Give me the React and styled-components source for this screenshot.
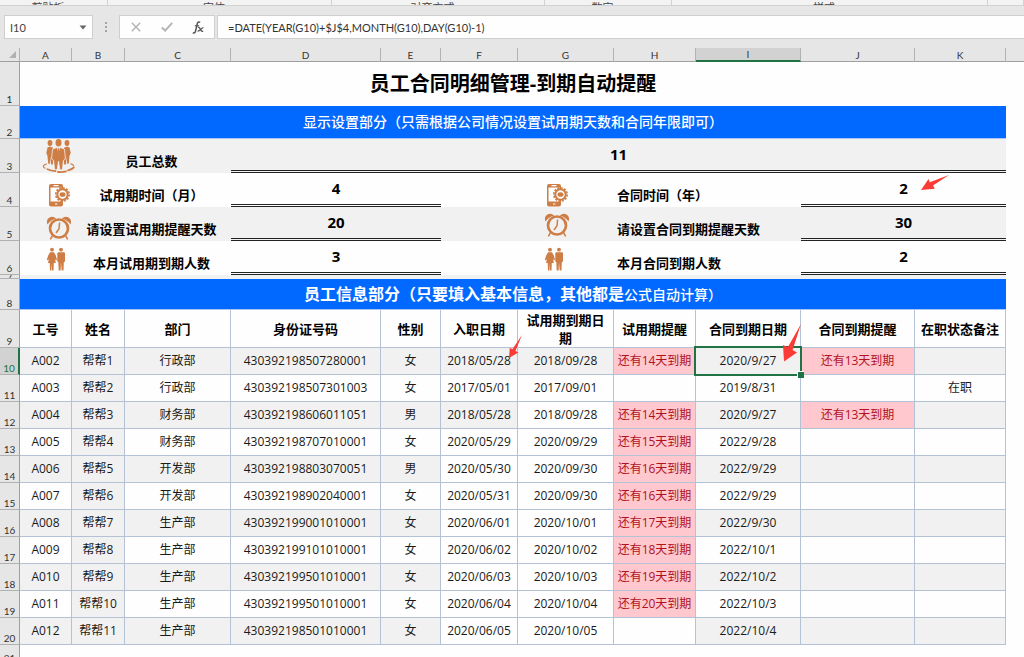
import React, { Component } from "react";
import styled, { createGlobalStyle, css } from "styled-components";

const GlobalStyle = createGlobalStyle`
  * {
    box-sizing: border-box;
  }
  body {
    margin: 0;
    overflow: hidden;
    background: #fefefe;
    font-family: "Open Sans", "Noto Sans CJK SC", sans-serif;
    font-size: 12px;
    color: #1a1a1a;
  }
`;

const Wrapper = styled.div`
  display: flex;
  flex-direction: column;
  height: 100vh;
  overflow: hidden;
`;

/* ribbon and formula bar */
const Ribbon = styled.div`
  display: grid;
  grid-template-columns: 108fr 224fr 213fr 127fr 316fr 36fr;
  align-items: end;
  flex: none;
  height: 6px;
  padding-bottom: 3px;
  overflow: hidden;
  background: #f3f3f3;
  border-bottom: 1px solid #d2d2d2;
`;
const RibbonGroup = styled.div`
  display: flex;
  align-items: flex-end;
  height: 14px;
  font-size: 11px;
  line-height: 12px;
  color: #444;
  border-right: 1px solid #d2d2d2;
  span {
    flex: 1;
    text-align: center;
  }
`;
const FormulaBar = styled.div`
  display: flex;
  align-items: center;
  flex: none;
  height: 42px;
  padding: 0 0 0 4px;
  background: #e6e6e6;
`;
const NameBox = styled.div`
  display: flex;
  width: 89px;
  height: 24px;
  background: #fefefe;
  border: 1px solid #cfcfcf;
  input {
    flex: 1;
    min-width: 0;
    padding: 0 5px;
    border: 0;
    background: none;
    font-family: Lato, "Open Sans", sans-serif;
    font-size: 11px;
    color: #444;
  }
`;
const ToolButton = styled.button`
  display: flex;
  align-items: center;
  justify-content: center;
  width: ${props => props.$width || 31}px;
  padding: 0;
  border: 0;
  background: none;
  color: ${props => props.color || "#b5b5b5"};
`;
const Dots = styled.svg`
  width: 26px;
  height: 10px;
  fill: #a3a3a3;
`;
const Tools = styled.div`
  display: flex;
  width: 96px;
  height: 24px;
  margin-right: 2px;
  background: #fefefe;
  border: 1px solid #cfcfcf;
`;
const Formula = styled.input`
  flex: 1;
  min-width: 0;
  height: 24px;
  padding: 0 10px;
  background: #fefefe;
  border: 1px solid #cfcfcf;
  border-right: 0;
  border-radius: 0;
  font-family: Lato, "Open Sans", sans-serif;
  font-size: 11px;
  color: #333;
`;

/* sheet */
const Sheet = styled.table`
  flex: none;
  width: 100%;
  table-layout: fixed;
  border-collapse: separate;
  border-spacing: 0;
`;
const Row = styled.tr`
  height: ${props => props.$height}px;
  background: ${props => (props.$shaded ? "#f1f1f1" : "#fefefe")};
`;
const ColumnHead = styled.th`
  height: 14px;
  padding: 0;
  font-family: Lato, "Open Sans", sans-serif;
  font-size: 10px;
  font-weight: 400;
  line-height: 12px;
  color: #333;
  background: ${props => (props.$active ? "#d2d2d2" : "#e6e6e6")};
  border-right: 1px solid #b1b1b1;
  border-bottom: ${props =>
    props.$active ? "2px solid #217346" : "1px solid #9f9f9f"};
  &:last-child {
    border-right: 0;
  }
  svg {
    display: block;
    margin-left: auto;
  }
`;
const RowHead = styled.th`
  padding: 0;
  vertical-align: bottom;
  font-family: Lato, "Open Sans", sans-serif;
  font-size: 10px;
  font-weight: 400;
  line-height: 12px;
  color: ${props => (props.$active ? "#217346" : "#333")};
  background: ${props => (props.$active ? "#d2d2d2" : "#e6e6e6")};
  border-right: ${props =>
    props.$active ? "2px solid #217346" : "1px solid #9f9f9f"};
  border-bottom: 1px solid #b1b1b1;
  div {
    max-height: ${props => props.$clip || 12}px;
    line-height: 4px;
    overflow: hidden;
  }
`;
const Title = styled.td`
  padding: 0;
  text-align: center;
  h1 {
    margin: 0;
    font-size: 20px;
    line-height: 28px;
    font-weight: 700;
    color: #000;
  }
`;
const Banner = styled.td`
  padding: 0;
  text-align: center;
  font-size: 14px;
  line-height: 20px;
  font-weight: 500;
  color: #fff;
  background: #0169ff;
  border-bottom: 1px solid #a9c4f0;
  strong {
    font-size: 16px;
    font-weight: 700;
  }
`;
const IconCell = styled.td`
  padding: 0 0 ${props => props.$lift || 0}px 22px;
  vertical-align: bottom;
  svg {
    display: block;
    overflow: visible;
  }
`;
const Label = styled.td`
  padding: 0 3px 3px;
  vertical-align: bottom;
  text-align: ${props => props.$align || "center"};
  font-size: 13px;
  line-height: 18px;
  font-weight: 700;
  color: #000;
`;
const Value = styled.td`
  position: relative;
  padding: 0 0 2px;
  text-align: center;
  font-size: 15px;
  line-height: 20px;
  font-weight: 700;
  color: #000;
  border-bottom: 3px double #222;
`;
const Filler = styled.td`
  padding: 0;
  background: #fefefe;
`;
const HeadCell = styled.th`
  padding: 0 3px;
  font-size: 13px;
  line-height: 18px;
  font-weight: 700;
  color: #000;
  border-right: 1px solid #b4c2d8;
  border-bottom: 1px solid #b4c2d8;
`;
const Cell = styled.td`
  position: relative;
  padding: 0;
  text-align: center;
  white-space: nowrap;
  line-height: 18px;
  background: ${props => (props.$shaded ? "#f1f1f1" : "#fefefe")};
  border-right: 1px solid #b4c2d8;
  border-bottom: 1px solid #b4c2d8;
  ${props =>
    props.$alert &&
    css`
      color: #b0121f;
      background: #ffc7ce;
    `}
`;
const Selection = styled.div`
  position: absolute;
  z-index: 1;
  inset: -2px;
  border: 2px solid #217346;
  &::after {
    content: "";
    position: absolute;
    right: -4px;
    bottom: -4px;
    width: 6px;
    height: 6px;
    background: #217346;
    border: 1px solid #fefefe;
    border-width: 1px 0 0 1px;
  }
`;
const ArrowMark = styled.svg`
  position: absolute;
  z-index: 2;
  right: ${props => props.$right}px;
  top: ${props => props.$top}px;
  fill: #fb3b36;
`;

const ORANGE = "#ce7d45";

const TeamIcon = () => (
  <svg width="34" height="34" viewBox="0 0 34 34" fill={ORANGE}>
    <ellipse cx="8" cy="4" rx="2.4" ry="3" />
    <ellipse cx="25" cy="4" rx="2.4" ry="3" />
    <path d="M5.5 8.5 8 7.6l3 1.2.6 8.2-.8 8.6H9L8.4 18l-.6 6.8H6.2l-.7-7.8-1.2-3z" />
    <path d="M27.5 8.5 25 7.6l-3 1.2-.6 8.2.8 8.6H24l.6-7.6.6 6.8h1.6l.7-7.8 1.2-3z" />
    <ellipse cx="16.5" cy="3.8" rx="3" ry="3.8" />
    <path
      d="M10.5 10.2 14.8 8.4h3.4l4.3 1.8.9 9.8-2 1.4-1 9.4h-2.6l-1.3-8.6-1.3 8.6h-2.6l-1-9.4-2-1.4z"
      stroke="#f1f1f1"
      strokeWidth=".8"
    />
    <path d="m14.6 8.6 1.9 6.4 1.9-6.4z" fill="#f1f1f1" />
    <path d="m15.8 9.2-.6 3.8 1.3 1.8 1.3-1.8-.6-3.8z" />
    <g fill="none" stroke={ORANGE} strokeLinecap="round">
      <path d="M4.5 25c-3.500 1-4.200 2.800-1.500 4.200" strokeWidth="1.2" />
      <path d="M5.5 30.2c2.200 1 4.500 1.600 8 2" strokeWidth="1.8" />
      <path d="M16 33c3 .3 5.500.2 8-.6" strokeWidth="1.8" />
      <path d="M26 31.3c3-.8 5-1.6 5.800-3" strokeWidth="1.8" />
      <path d="M31.5 26.5c-.5-.9-1.300-1.400-2.500-1.700" strokeWidth="1.2" />
    </g>
  </svg>
);

const PhoneIcon = () => (
  <svg width="34" height="24" viewBox="0 0 34 24" fill={ORANGE}>
    <path d="M9 1h10a2 2 0 0 1 2 2v3h-1.500V4.500h-11v14h11V17H21v4.500a2 2 0 0 1-2 2H9a2 2 0 0 1-2-2V3a2 2 0 0 1 2-2z" />
    <path d="M11.5 2.6h5M13 21h2.400" stroke="#fefefe" strokeWidth="1.1" />
    <circle
      cx="20.5"
      cy="11.5"
      r="6.7"
      fill="none"
      stroke={ORANGE}
      strokeWidth="1.6"
      strokeDasharray="2.1 1.4"
    />
    <circle cx="20.5" cy="11.5" r="5.2" fill="#fefefe" stroke={ORANGE} strokeWidth="2" />
    <ellipse cx="20.5" cy="11.5" rx="3" ry="2.3" />
  </svg>
);

const ClockIcon = () => (
  <svg width="34" height="24" viewBox="0 0 34 24" fill={ORANGE}>
    <path d="M5.5 8.5C3.7 4.5 6.5.8 10 .8c2.2 0 3.5 1 4 2C10.5 3.5 7.5 5.5 5.5 8.5z" />
    <path d="M28.5 8.5C30.3 4.5 27.5.8 24 .8c-2.2 0-3.5 1-4 2 3.5.7 6.500 2.700 8.500 5.700z" />
    <circle cx="17" cy="12.5" r="9" fill="none" stroke={ORANGE} strokeWidth="2.7" />
    <path
      d="M17.6 6.5 17 12.8l-3 4.2M10.3 20 8.3 23.3M23.7 20l2 3.3"
      fill="none"
      stroke={ORANGE}
      strokeWidth="1.5"
    />
  </svg>
);

const CoupleIcon = () => (
  <svg width="34" height="24" viewBox="0 0 34 24" fill={ORANGE}>
    <circle cx="10" cy="2.7" r="1.9" />
    <path d="M8 5.3h4l1.7 3 1.300 4.500-1.200.7-1-2.100 1 4.600h-2l-.3 7.500H10l-.2-7.500-.4 7.500H8l-.3-7.500H6l1.200-4.700-1.100 2.200-1.300-.7 1.500-4.500z" />
    <circle cx="19" cy="2.7" r="1.9" />
    <path d="M16.2 5.3h6L23 6v8.500l-1.200.8-.3 8.200h-1.800L19 15.500l-.4 8h-1.900l-.4-8.200-1-.8V6z" />
  </svg>
);

const columns = [20, 52, 53, 106, 150, 60, 77, 96, 82, 105, 114, 91];
const letters = "ABCDEFGHIJK".split("");
const ribbonGroups = ["剪贴板", "字体", "对齐方式", "数字", "样式", ""];
const headings = [
  "工号",
  "姓名",
  "部门",
  "身份证号码",
  "性别",
  "入职日期",
  "试用期到期日期",
  "试用期提醒",
  "合同到期日期",
  "合同到期提醒",
  "在职状态备注"
];

const settings = [
  {
    row: 4,
    icon: <PhoneIcon />,
    left: ["试用期时间（月）", "4"],
    right: ["合同时间（年）", "2"]
  },
  {
    row: 5,
    icon: <ClockIcon />,
    lift: 1,
    rightLift: 4,
    left: ["请设置试用期提醒天数", "20"],
    right: ["请设置合同到期提醒天数", "30"]
  },
  {
    row: 6,
    icon: <CoupleIcon />,
    lift: 4,
    left: ["本月试用期到期人数", "3"],
    right: ["本月合同到期人数", "2"]
  }
];

const employees = [
  ["A002", "帮帮1", "行政部", "430392198507280001", "女", "2018/05/28", "2018/09/28", "还有14天到期", "2020/9/27", "还有13天到期", ""],
  ["A003", "帮帮2", "行政部", "430392198507301003", "女", "2017/05/01", "2017/09/01", "", "2019/8/31", "", "在职"],
  ["A004", "帮帮3", "财务部", "430392198606011051", "男", "2018/05/28", "2018/09/28", "还有14天到期", "2020/9/27", "还有13天到期", ""],
  ["A005", "帮帮4", "财务部", "430392198707010001", "女", "2020/05/29", "2020/09/29", "还有15天到期", "2022/9/28", "", ""],
  ["A006", "帮帮5", "开发部", "430392198803070051", "男", "2020/05/30", "2020/09/30", "还有16天到期", "2022/9/29", "", ""],
  ["A007", "帮帮6", "开发部", "430392198902040001", "女", "2020/05/31", "2020/09/30", "还有16天到期", "2022/9/29", "", ""],
  ["A008", "帮帮7", "生产部", "430392199001010001", "女", "2020/06/01", "2020/10/01", "还有17天到期", "2022/9/30", "", ""],
  ["A009", "帮帮8", "生产部", "430392199101010001", "女", "2020/06/02", "2020/10/02", "还有18天到期", "2022/10/1", "", ""],
  ["A010", "帮帮9", "生产部", "430392199501010001", "女", "2020/06/03", "2020/10/03", "还有19天到期", "2022/10/2", "", ""],
  ["A011", "帮帮10", "生产部", "430392199501010001", "女", "2020/06/04", "2020/10/04", "还有20天到期", "2022/10/3", "", ""],
  ["A012", "帮帮11", "生产部", "430392198501010001", "女", "2020/06/05", "2020/10/05", "", "2022/10/4", "", ""]
];

const isShaded = (row, col) => {
  if (col === 1) return true;
  if (col === 5) return row === 0 || row === 2;
  if (col === 6) return row === 0;
  if (col === 7) return false;
  return row % 2 === 0;
};

class App extends Component {
  constructor() {
    super();
    this.state = {
      name: "I10",
      formula: "=DATE(YEAR(G10)+$J$4,MONTH(G10),DAY(G10)-1)"
    };
  }

  renderBars() {
    const { name, formula } = this.state;
    return (
      <>
        <Ribbon>
          {ribbonGroups.map((group, i) => (
            <RibbonGroup key={i}>
              <span>{group}</span>
              {group && (
                <svg width="11" height="10" viewBox="0 0 11 10" stroke="#666" fill="none">
                  <path d="M2 7V2h5M4 4l4 4M8.5 4.5v4h-4" />
                </svg>
              )}
            </RibbonGroup>
          ))}
        </Ribbon>
        <FormulaBar>
          <NameBox>
            <input
              aria-label="名称框"
              value={name}
              onChange={e => this.setState({ name: e.target.value })}
            />
            <ToolButton $width={18} color="#666" aria-label="展开名称列表">
              <svg width="8" height="5" viewBox="0 0 8 5" fill="currentColor">
                <path d="M.5.5h7L4 4.5z" />
              </svg>
            </ToolButton>
          </NameBox>
          <Dots viewBox="0 0 26 10">
            <rect x="12" y="0" width="2" height="2" />
            <rect x="12" y="4" width="2" height="2" />
            <rect x="12" y="8" width="2" height="2" />
          </Dots>
          <Tools>
            <ToolButton aria-label="取消">
              <svg width="10" height="10" viewBox="0 0 10 10" stroke="currentColor" strokeWidth="1.5">
                <path d="m.8.8 8.4 8.4M9.2.8.8 9.2" />
              </svg>
            </ToolButton>
            <ToolButton aria-label="输入">
              <svg width="12" height="10" viewBox="0 0 12 10" stroke="currentColor" strokeWidth="2" fill="none">
                <path d="m.8 5.4 3.4 3.2L11.2.8" />
              </svg>
            </ToolButton>
            <ToolButton aria-label="插入函数" color="#555">
              <svg width="12" height="13" viewBox="0 0 12 13" stroke="currentColor" fill="none">
                <path d="M8.2 1.3C6.5.3 5.6 1.2 5.2 3L3.6 9.8C3.2 11.6 2.4 12.4.8 11.8" strokeWidth="1.5" />
                <path d="M2.8 4.8h4.4" strokeWidth="1.2" />
                <path d="M6 6.5c1.6-.4 2 .6 2.5 2s1.2 2.2 2.700 1.800M11.500 6.500C9.500 6.500 8 10.600 5.600 10.200" strokeWidth="1.2" />
              </svg>
            </ToolButton>
          </Tools>
          <Formula
            aria-label="编辑栏"
            value={formula}
            onChange={e => this.setState({ formula: e.target.value })}
          />
        </FormulaBar>
      </>
    );
  }

  renderSettings() {
    return settings.map(({ row, icon, lift, rightLift, left, right }) => (
      <Row key={row} $height={34} $shaded={row === 5}>
        <RowHead scope="row">{row}</RowHead>
        <IconCell $lift={lift}>{icon}</IconCell>
        <Label colSpan={2}>{left[0]}</Label>
        <Value colSpan={2}>{left[1]}</Value>
        <td />
        <IconCell $lift={rightLift || lift}>{icon}</IconCell>
        <Label colSpan={2} $align="left">
          {right[0]}
        </Label>
        <Value colSpan={2}>
          {right[1]}
          {row === 4 && (
            <ArrowMark $right={57} $top={2} width="28" height="16" viewBox="0 0 28 16">
              <path d="M0 15 7.5 4l1.2 3.2L28 0 12 10.4l1.8 3.4z" />
            </ArrowMark>
          )}
        </Value>
        <Filler />
      </Row>
    ));
  }

  renderEmployees() {
    return employees.map((employee, row) => (
      <Row key={employee[0]} $height={27}>
        <RowHead scope="row" $active={row === 0}>
          {row + 10}
        </RowHead>
        {employee.map((text, col) => (
          <Cell
            key={col}
            $shaded={isShaded(row, col)}
            $alert={(col === 7 || col === 9) && text !== ""}
          >
            {text}
            {row === 0 && col === 5 && (
              <ArrowMark $right={-5} $top={-13} width="13" height="23" viewBox="0 0 13 23">
                <path d="M0 23 .8 12.8l2.6 1.4L13 0 6.4 16l3 1.6z" />
              </ArrowMark>
            )}
            {row === 0 && col === 8 && (
              <>
                <Selection />
                <ArrowMark $right={-1} $top={-24} width="18" height="38" viewBox="0 0 18 38">
                  <path d="M1 37.5 0 21l4.8 2.2L18 0 9.6 26l4.4 2.4z" />
                </ArrowMark>
              </>
            )}
          </Cell>
        ))}
        <Filler />
      </Row>
    ));
  }

  render() {
    return (
      <Wrapper>
        <GlobalStyle />
        {this.renderBars()}
        <Sheet>
          <colgroup>
            {columns.map((width, i) => (
              <col key={i} width={width} />
            ))}
            <col />
          </colgroup>
          <thead>
            <tr>
              <ColumnHead aria-label="全选">
                <svg width="10" height="9" viewBox="0 0 10 9" fill="#b1b1b1">
                  <path d="M7 1v7H0z" />
                </svg>
              </ColumnHead>
              {letters.map(letter => (
                <ColumnHead key={letter} scope="col" $active={letter === "I"}>
                  {letter}
                </ColumnHead>
              ))}
              <ColumnHead />
            </tr>
          </thead>
          <tbody>
            <Row $height={44}>
              <RowHead scope="row">1</RowHead>
              <Title colSpan={11}>
                <h1>员工合同明细管理-到期自动提醒</h1>
              </Title>
              <Filler />
            </Row>
            <Row $height={33}>
              <RowHead scope="row">2</RowHead>
              <Banner colSpan={11}>
                显示设置部分（只需根据公司情况设置试用期天数和合同年限即可）
              </Banner>
              <Filler />
            </Row>
            <Row $height={34} $shaded>
              <RowHead scope="row">3</RowHead>
              <IconCell>
                <TeamIcon />
              </IconCell>
              <Label colSpan={2}>员工总数</Label>
              <Value colSpan={8}>11</Value>
              <Filler />
            </Row>
            {this.renderSettings()}
            <Row $height={4} $shaded>
              <RowHead scope="row" $clip={3}>
                <div>7</div>
              </RowHead>
              <td colSpan={11} />
              <Filler />
            </Row>
            <Row $height={31}>
              <RowHead scope="row">8</RowHead>
              <Banner colSpan={11}>
                <strong>员工信息部分（只要填入基本信息，其他都是</strong>
                公式自动计算）
              </Banner>
              <Filler />
            </Row>
            <Row $height={38}>
              <RowHead scope="row">9</RowHead>
              {headings.map(heading => (
                <HeadCell key={heading} scope="col">
                  {heading}
                </HeadCell>
              ))}
              <Filler />
            </Row>
            {this.renderEmployees()}
            <Row $height={20}>
              <RowHead scope="row">21</RowHead>
              <Filler colSpan={12} />
            </Row>
          </tbody>
        </Sheet>
      </Wrapper>
    );
  }
}

export default App;
